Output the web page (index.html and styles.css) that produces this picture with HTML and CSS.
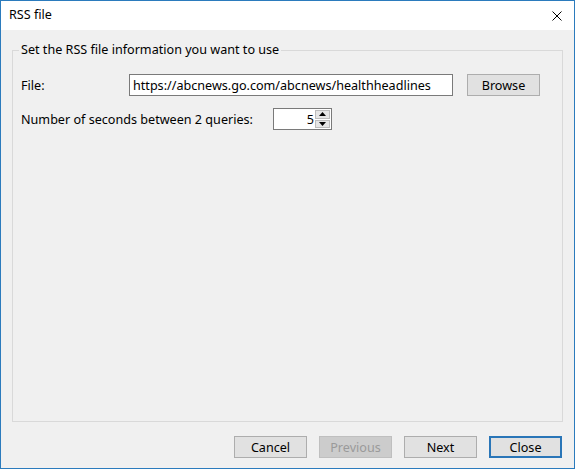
FILE: index.html
```html
<!doctype html>
<html lang="en">
  <head>
    <meta charset="UTF-8" />
    <title>RSS file</title>
    <link rel="stylesheet" href="styles.css">
  </head>
  <body>
    <div class="window">
      <div class="titlebar">
        <span class="title">RSS file</span>
        <button class="close-x" aria-label="Close">
          <svg width="10" height="10" viewBox="0 0 10 10">
            <path d="M0.5 0.5 L9.5 9.5 M9.5 0.5 L0.5 9.5" stroke="#000" stroke-width="1" fill="none" />
          </svg>
        </button>
      </div>

      <div class="content">
        <fieldset class="group">
          <legend>Set the RSS file information you want to use</legend>

          <div class="row">
            <label class="label file-label" for="file">File:</label>
            <input id="file" class="textbox" type="text" value="https://abcnews.go.com/abcnews/healthheadlines">
            <button class="btn browse">Browse</button>
          </div>

          <div class="row">
            <label class="label secs-label" for="secs">Number of seconds between 2 queries:</label>
            <div class="spinner">
              <input id="secs" class="spin-value" type="text" value="5">
              <div class="spin-arrows">
                <span class="spin-btn">
                  <svg width="7" height="4" viewBox="0 0 7 4"><path d="M0 4 L3.5 0 L7 4 Z" fill="#000" /></svg>
                </span>
                <span class="spin-btn">
                  <svg width="7" height="4" viewBox="0 0 7 4"><path d="M0 0 L3.5 4 L7 0 Z" fill="#000" /></svg>
                </span>
              </div>
            </div>
          </div>
        </fieldset>

        <div class="footer">
          <button class="btn">Cancel</button>
          <button class="btn" disabled>Previous</button>
          <button class="btn">Next</button>
          <button class="btn default">Close</button>
        </div>
      </div>
    </div>
  </body>
</html>
```

FILE: styles.css
```css
body {
  margin: 0;
  font-family: "Noto Sans", "Open Sans", sans-serif;
  font-size: 12.6px;
  color: #000;
  background: #f0f0f0;
}
.window {
  box-sizing: border-box;
  width: 575px;
  height: 469px;
  border: 1px solid #2b7bbd;
  display: flex;
  flex-direction: column;
  background: #f0f0f0;
}
.titlebar {
  height: 29px;
  background: #fff;
  display: flex;
  align-items: center;
  justify-content: space-between;
  padding-left: 8px;
}
.title {
  font-size: 12.6px;
  margin-top: -2px;
}
.close-x {
  border: none;
  background: none;
  padding: 0;
  width: 30px;
  height: 29px;
  display: flex;
  align-items: center;
  justify-content: center;
  margin-right: 2px;
}
.content {
  flex: 1;
  display: flex;
  flex-direction: column;
  padding: 12px 11px 0 11px;
}
.group {
  margin: 0;
  height: 380px;
  box-sizing: border-box;
  border: 1px solid #d9d9d9;
  padding: 0 8px 0 6px;
}
.group legend {
  padding: 0 2px;
  line-height: 16px;
}
.row {
  display: flex;
  align-items: center;
  padding-left: 2px;
  height: 22px;
  margin-top: 12px;
}
.row:first-of-type {
  margin-top: 16px;
}
.label {
  flex-shrink: 0;
}
.file-label {
  width: 108px;
}
.secs-label {
  width: 252px;
}
.textbox {
  box-sizing: border-box;
  width: 324px;
  height: 22px;
  border: 1px solid #7a7a7a;
  background: #fff;
  font: inherit;
  padding: 0 3px;
  margin: 0;
}
.btn {
  box-sizing: border-box;
  width: 73px;
  height: 22px;
  background: #e1e1e1;
  border: 1px solid #adadad;
  font: inherit;
  color: #000;
  padding: 0;
}
.btn:disabled {
  background: #cccccc;
  border-color: #bfbfbf;
  color: #9a9a9a;
}
.btn.default {
  border: 2px solid #2a76b8;
}
.browse {
  margin-left: 14px;
}
.spinner {
  box-sizing: border-box;
  width: 59px;
  height: 22px;
  border: 1px solid #7a7a7a;
  background: #fff;
  display: flex;
}
.spin-value {
  flex: 1;
  min-width: 0;
  border: none;
  font: inherit;
  text-align: right;
  padding: 0 1px 0 0;
  margin: 0;
  background: transparent;
}
.spin-arrows {
  width: 15px;
  display: flex;
  flex-direction: column;
  padding: 1px 1px 1px 0;
  gap: 1px;
}
.spin-btn {
  flex: 1;
  background: #e5e5e5;
  border: 1px solid #bcbcbc;
  display: flex;
  align-items: center;
  justify-content: center;
}
.footer {
  display: flex;
  justify-content: flex-end;
  gap: 12px;
  margin-top: 14px;
  padding-right: 1px;
}
```
